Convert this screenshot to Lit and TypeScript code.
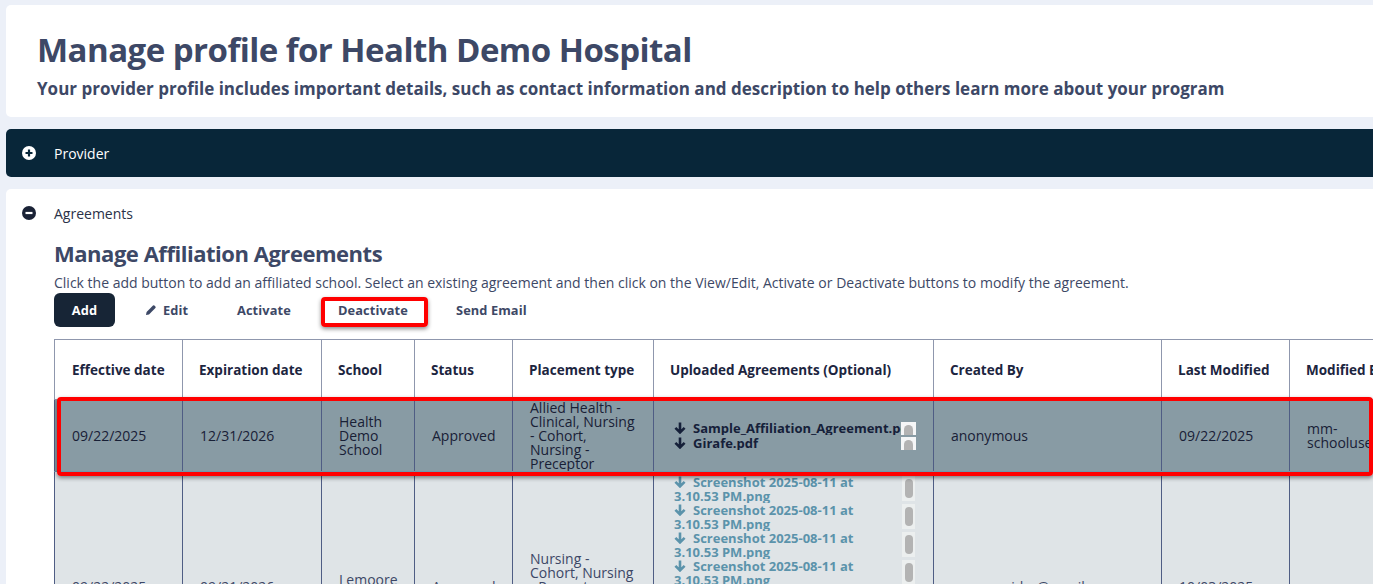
import { LitElement, html, css } from "lit";
import { customElement } from "lit/decorators.js";

const arrow = html`<svg class="arrow" viewBox="0 0 12 12"><path d="M6 .5v10M1.4 5.8L6 10.4 10.6 5.8" fill="none" stroke="currentColor" stroke-width="2.6"/></svg>`;
const sfile = (name: string) => html`<div class="file"><div class="fname">${arrow}<span>${name}</span></div><div class="track"><div class="thumb"></div></div></div>`;

@customElement("app-root")
export class AppRoot extends LitElement {
  static styles = css`
    :host { display: block; position: relative; width: 1373px; height: 584px; overflow: hidden; background: #ecf0f8; font-family: "Open Sans", sans-serif; color: #3d4866; }
    .page { display: flex; flex-direction: column; gap: 12px; padding: 5px 0 0 6px; width: 1500px; box-sizing: border-box; }
    .panel { background: #fff; border-radius: 5px; }
    .head { height: 112px; padding: 26px 32px 0; box-sizing: border-box; }
    h1 { margin: 0 0 0 -1px; font-size: 33px; line-height: 38px; font-weight: 700; letter-spacing: -0.53px; color: #3d4866; }
    .sub { margin: 8px 0 0 -1px; font-size: 17px; line-height: 24px; font-weight: 700; color: #3d4866; }
    .bar { height: 48px; background: #082639; color: #fff; display: flex; align-items: center; padding-left: 16px; gap: 18px; font-size: 14px; }
    .bar svg, .agr svg.tog { width: 14px; height: 14px; flex: none; }
    .agr { padding: 0 0 0 16px; height: 420px; }
    .agr-top { height: 48px; display: flex; align-items: center; gap: 18px; font-size: 14px; color: #2a3148; }
    .agr-body { padding-left: 32px; }
    h2 { margin: 1px 0 0; font-size: 22px; line-height: 30px; font-weight: 700; letter-spacing: -0.47px; color: #3d4866; }
    .hint { margin: 5px 0 0; font-size: 14px; line-height: 20px; color: #3d4866; white-space: nowrap; }
    .btns { display: flex; align-items: center; height: 34px; font-size: 12.8px; font-weight: 700; color: #3d4866; letter-spacing: .1px; }
    .btn { display: flex; align-items: center; height: 34px; gap: 6px; }
    .add { width: 61px; justify-content: center; background: #172536; color: #fff; border-radius: 6px; margin-right: 30px; }
    .edit { width: 44px; margin-right: 48px; }
    .edit svg { width: 12px; height: 12px; }
    .act { width: 54px; margin-right: 47px; }
    .deact { width: 71px; margin-right: 47px; }
    table { border-collapse: collapse; table-layout: fixed; width: 1360px; margin-top: 12px; font-size: 14px; line-height: 14px; color: #1d2540; }
    th, td { border: 1px solid #4f5d84; box-sizing: border-box; overflow: hidden; vertical-align: middle; text-align: left; }
    th { height: 60px; padding: 0 8px 0 16px; font-weight: 700; font-size: 13.5px; color: #1c2540; border-color: #8f97ad; white-space: nowrap; }
    th:first-child { padding-left: 17px; }
    td { padding: 0 16px 0 17px; color: #2b3450; }
    .sel td { background: #889ba4; height: 72px; color: #182036; border-bottom-color: #6e97ab; }
    .next td { background: #dfe4e7; height: 230px; color: #3c4766; }
    td.sch { padding-right: 10px; }
    td.files { padding: 0 16px; }
    td.pl { padding-right: 18px; }
    .file { display: flex; justify-content: space-between; font-size: 13px; font-weight: 700; line-height: 14px; }
    .fname { flex: none; width: 227px; padding-left: 4px; overflow: hidden; }
    .sel .fname { white-space: nowrap; }
    .sel .file { align-items: flex-start; color: #152039; }
    .arrow { width: 12px; height: 12px; margin-right: 7px; vertical-align: -1px; }
    .track { width: 15px; height: 13px; background: #f5f6f7; position: relative; overflow: hidden; margin-right: 1px; margin-top: 1px; }
    .thumb { position: absolute; left: 3px; right: 3px; top: 3px; height: 24px; border-radius: 5px; background: #b3b3b3; }
    .sel .file + .file { margin-top: 1px; }
    .list { display: flex; flex-direction: column; }
    .next .file { color: #5b93ab; height: 28px; }
    .next .track { height: 25px; width: 13px; margin-right: 2px; margin-top: 1px; background: #ecefef; }
    .next .thumb { left: 3px; right: 2px; top: 3px; height: 19px; }
    .mark { position: absolute; border: 4px solid #f00; border-radius: 4px; box-shadow: 0 2px 4px rgba(0,0,0,.45); box-sizing: border-box; pointer-events: none; }
    .m1 { left: 321px; top: 297px; width: 107px; height: 30px; }
    .m2 { left: 57px; top: 397px; width: 1316px; height: 79px; }
  `;
  render() {
    const shot = "Screenshot 2025-08-11 at 3.10.53 PM.png";
    return html`
      <div class="page">
        <section class="panel head">
          <h1>Manage profile for Health Demo Hospital</h1>
          <p class="sub">Your provider profile includes important details, such as contact information and description to help others learn more about your program</p>
        </section>
        <section class="panel bar">
          <svg viewBox="0 0 14 14"><circle cx="7" cy="7" r="7" fill="#fff"/><path d="M7 3.5v7M3.5 7h7" stroke="#082639" stroke-width="2.2"/></svg>
          <span>Provider</span>
        </section>
        <section class="panel agr">
          <div class="agr-top">
            <svg class="tog" viewBox="0 0 14 14"><circle cx="7" cy="7" r="7" fill="#1a2236"/><path d="M3.5 7h7" stroke="#fff" stroke-width="2.2"/></svg>
            <span>Agreements</span>
          </div>
          <div class="agr-body">
            <h2>Manage Affiliation Agreements</h2>
            <p class="hint">Click the add button to add an affiliated school. Select an existing agreement and then click on the View/Edit, Activate or Deactivate buttons to modify the agreement.</p>
            <div class="btns">
              <div class="btn add">Add</div>
              <div class="btn edit"><svg viewBox="0 0 12 12"><path d="M1 11l.6-3L8 1.6a1 1 0 0 1 1.4 0L10.4 2.6a1 1 0 0 1 0 1.4L4 10.4z" fill="#3d4866"/></svg><span>Edit</span></div>
              <div class="btn act">Activate</div>
              <div class="btn deact">Deactivate</div>
              <div class="btn">Send Email</div>
            </div>
            <table>
              <colgroup><col style="width:128px"><col style="width:139px"><col style="width:93px"><col style="width:98px"><col style="width:141px"><col style="width:280px"><col style="width:228px"><col style="width:128px"><col style="width:125px"></colgroup>
              <thead><tr><th>Effective date</th><th>Expiration date</th><th>School</th><th>Status</th><th>Placement type</th><th>Uploaded Agreements (Optional)</th><th>Created By</th><th>Last Modified</th><th>Modified By</th></tr></thead>
              <tbody>
                <tr class="sel">
                  <td>09/22/2025</td><td>12/31/2026</td><td class="sch">Health Demo School</td><td>Approved</td>
                  <td class="pl">Allied Health - Clinical, Nursing - Cohort, Nursing - Preceptor</td>
                  <td class="files"><div class="list">${sfile("Sample_Affiliation_Agreement.pdf")}${sfile("Girafe.pdf")}</div></td>
                  <td>anonymous</td><td>09/22/2025</td><td>mm-schooluser</td>
                </tr>
                <tr class="next">
                  <td>09/22/2025</td><td>09/21/2026</td><td class="sch">Lemoore College</td><td>Approved</td>
                  <td class="pl">Nursing - Cohort, Nursing - Preceptor, Allied Health - Clinical</td>
                  <td class="files"><div class="list">${[1,2,3,4,5,6,7,8].map(() => sfile(shot))}</div></td>
                  <td>mm-provider@gmail.com</td><td>10/03/2025</td><td></td>
                </tr>
              </tbody>
            </table>
          </div>
        </section>
      </div>
      <div class="mark m1"></div>
      <div class="mark m2"></div>
    `;
  }
}
